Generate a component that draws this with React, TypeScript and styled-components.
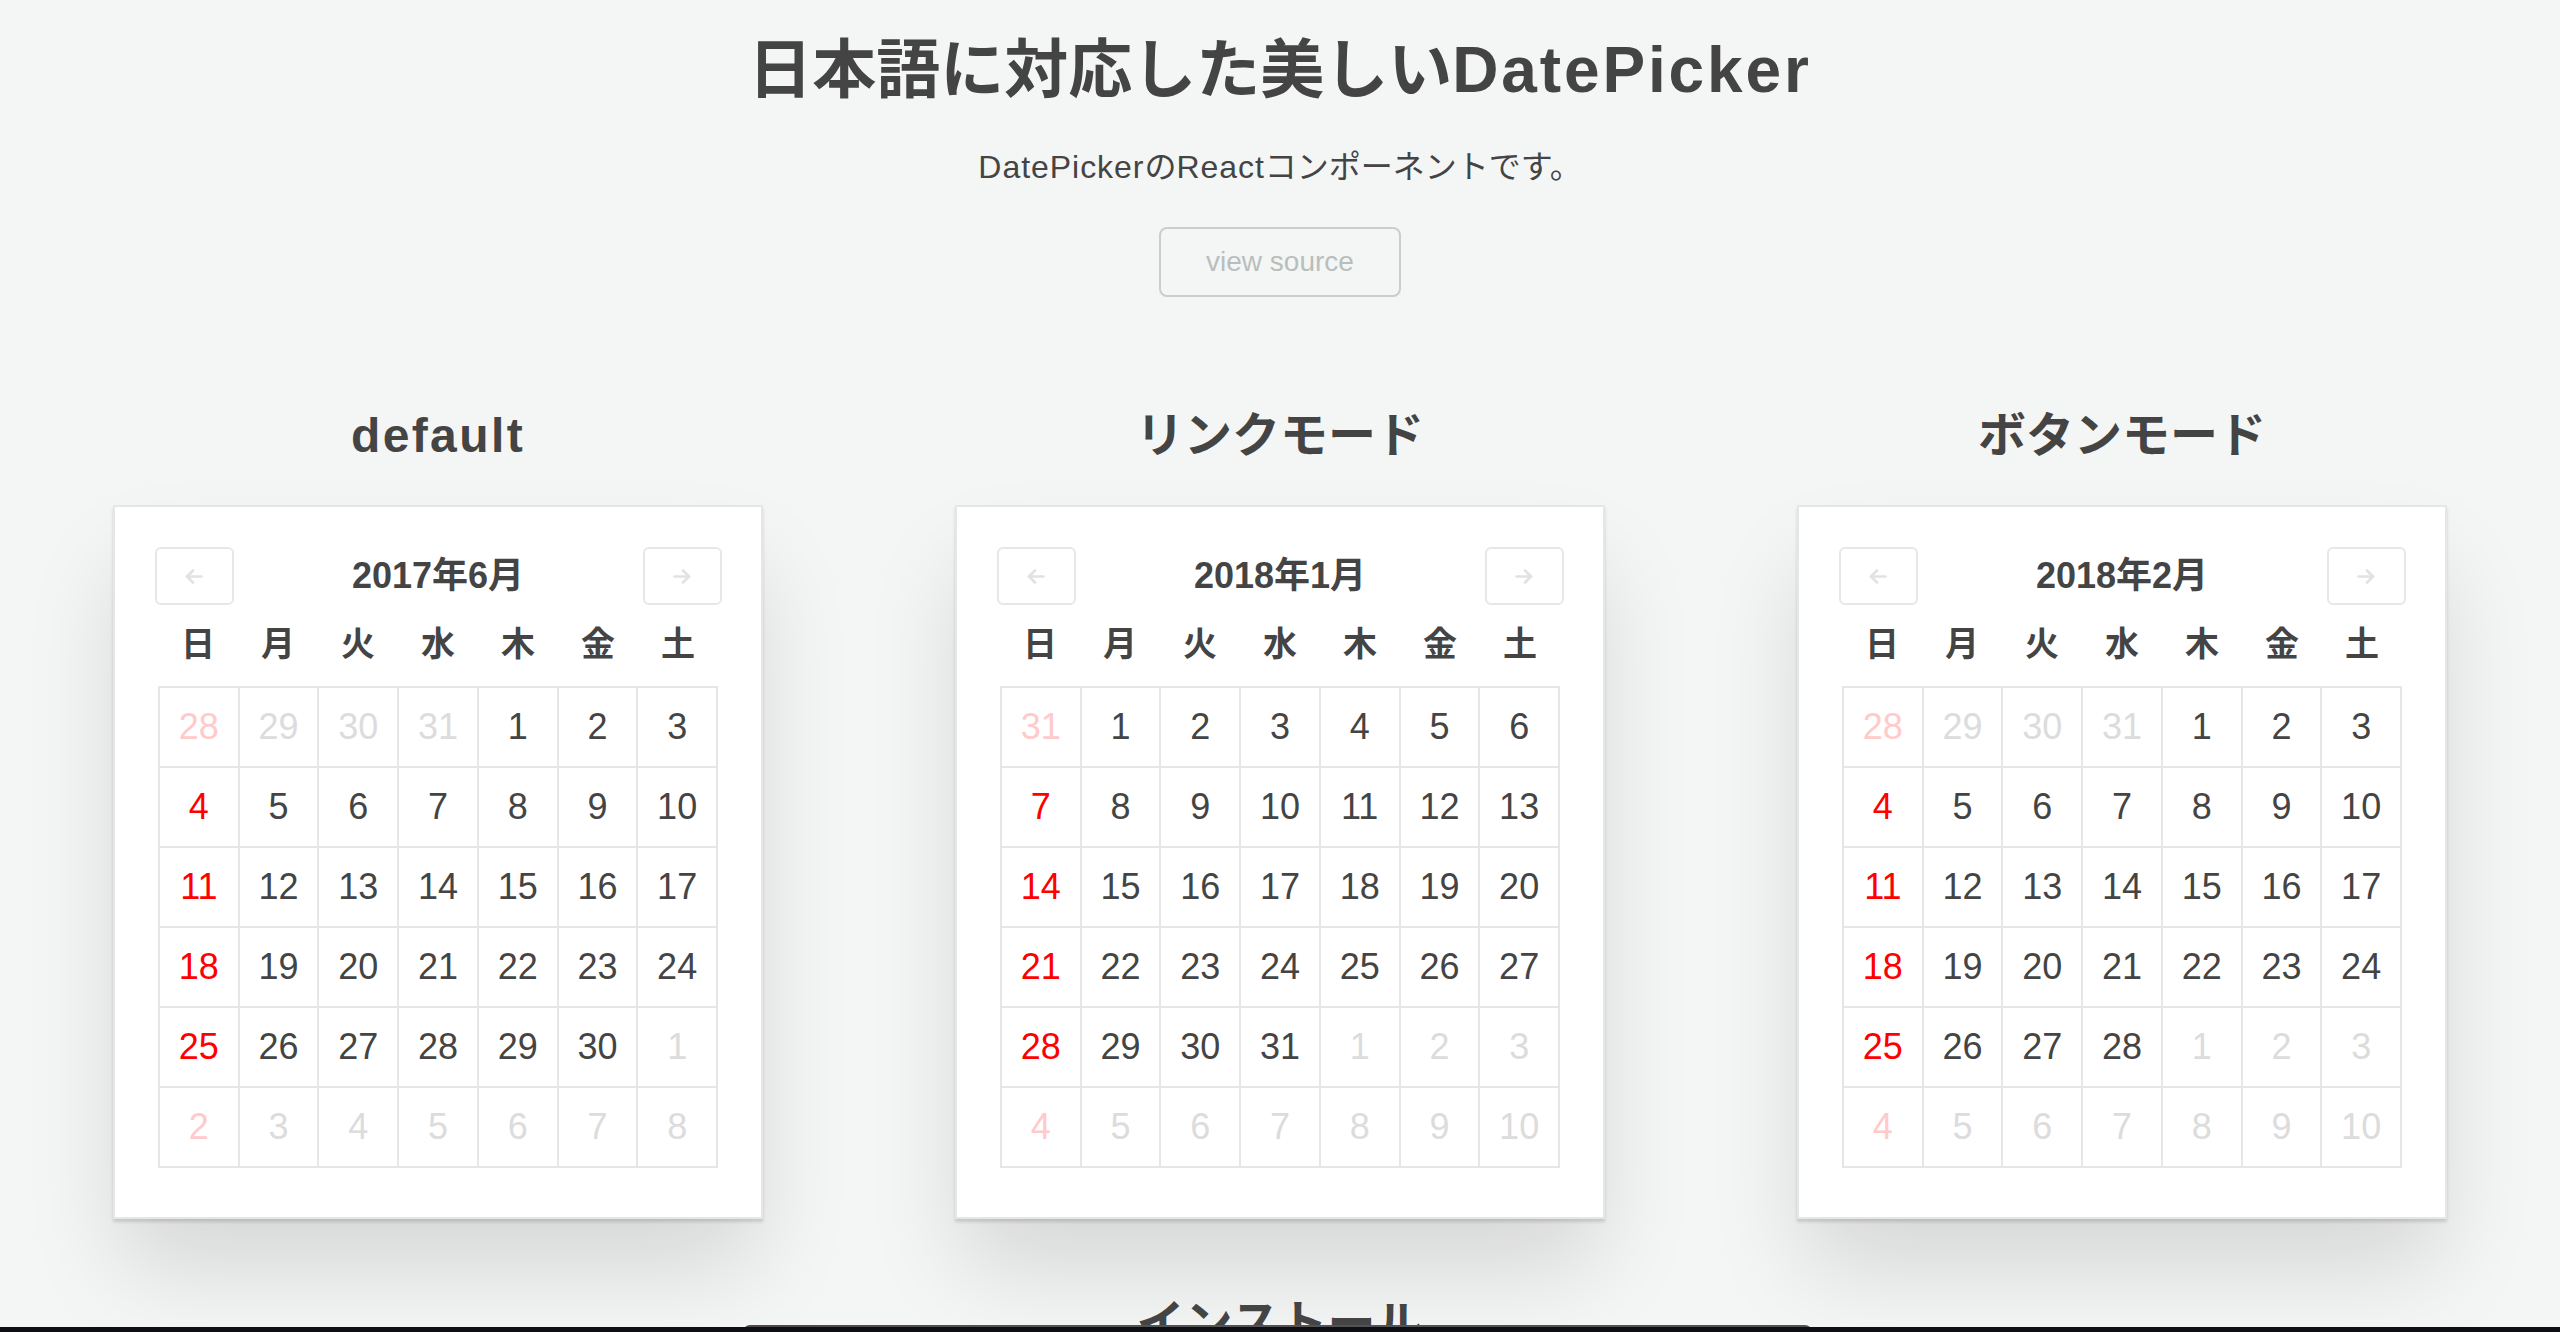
import React from "react";
import styled, {createGlobalStyle} from "styled-components";

const GlobalStyle = createGlobalStyle`
    html, body {
        margin: 0;
        padding: 0;
    }

    body {
        background: #f4f6f5;
        color: #444;
        font-family: "Liberation Sans", "Noto Sans CJK JP", sans-serif;
    }
`;

const Page = styled.div`
    display: flex;
    flex-direction: column;
    align-items: center;
    padding-top: 34px;
`;

const Title = styled.h1`
    margin: 0;
    font-size: 64px;
    line-height: 72px;
    font-weight: 700;
`;

// latin runs in the reference font are wider than Arial, so track them out a bit
const Latin = styled.span<{ $track: number }>`
    letter-spacing: ${(props) => props.$track}em;
`;

const Lead = styled.p`
    margin: 41px 0 0;
    font-size: 32px;
    line-height: 40px;
`;

const SourceLink = styled.a`
    margin-top: 40px;
    box-sizing: border-box;
    width: 242px;
    height: 70px;
    border: 2px solid #c9cdcc;
    border-radius: 8px;
    color: #b9bebd;
    font-size: 28px;
    line-height: 66px;
    text-align: center;
    text-decoration: none;
`;

const Sections = styled.div`
    box-sizing: border-box;
    width: 100%;
    margin-top: 111px;
    padding: 0 17px;
    display: grid;
    grid-template-columns: repeat(3, 1fr);
`;

const Column = styled.section`
    display: flex;
    flex-direction: column;
    align-items: center;
`;

const Heading = styled.h2`
    margin: 0;
    font-size: 48px;
    line-height: 56px;
    font-weight: 700;
`;

const Card = styled.div`
    box-sizing: border-box;
    width: 650px;
    margin-top: 41px;
    padding: 40px 0 49px;
    background: #fff;
    border: 2px solid #e4e7e6;
    box-shadow: 0 3px 3px rgba(0, 0, 0, 0.14), 0 55px 90px -8px rgba(0, 0, 0, 0.13);
`;

const CalHeader = styled.div`
    width: 567px;
    height: 58px;
    margin: 0 auto;
    display: flex;
    justify-content: space-between;
    align-items: center;
`;

const NavButton = styled.button`
    box-sizing: border-box;
    width: 79px;
    height: 58px;
    padding: 0;
    display: flex;
    align-items: center;
    justify-content: center;
    background: #fff;
    border: 2px solid #e6e8e8;
    border-radius: 6px;
    color: #e0e3e3;
    cursor: pointer;
`;

const MonthLabel = styled.div`
    font-size: 36px;
    line-height: 58px;
    font-weight: 700;
`;

const Weekdays = styled.div`
    width: 560px;
    margin: 18px auto 21px;
    display: grid;
    grid-template-columns: repeat(7, 1fr);
    font-size: 34px;
    line-height: 42px;
    font-weight: 700;
    text-align: center;
`;

const Days = styled.div`
    box-sizing: border-box;
    width: 560px;
    margin: 0 auto;
    display: grid;
    grid-template-columns: repeat(7, 1fr);
    border-top: 2px solid #e4e7e6;
    border-left: 2px solid #e4e7e6;
`;

type Tone = "normal" | "sunday" | "outside" | "outsideSunday";

const toneColor: Record<Tone, string> = {
    normal: "#444",
    sunday: "#ff0000",
    outside: "#dcdcdc",
    outsideSunday: "#ffcaca",
};

const Day = styled.div<{ $tone: Tone }>`
    box-sizing: border-box;
    height: 80px;
    display: flex;
    align-items: center;
    justify-content: center;
    border-right: 2px solid #e4e7e6;
    border-bottom: 2px solid #e4e7e6;
    font-size: 36px;
    color: ${(props) => toneColor[props.$tone]};
`;

const NextHeading = styled(Heading)`
    margin-top: 77px;
`;

const DesktopEdge = styled.div`
    position: fixed;
    left: 0;
    right: 0;
    bottom: 0;
    height: 5px;
    background: #0d0f14;
`;

const Dock = styled.div`
    position: fixed;
    left: 743px;
    width: 1069px;
    bottom: 0;
    height: 7px;
    border-radius: 8px 8px 0 0;
    background: linear-gradient(90deg, #4f4749, #535355 30%, #505153);
`;

const WEEKDAYS = ["日", "月", "火", "水", "木", "金", "土"];

interface DayCell {
    date: number;
    tone: Tone;
}

function buildDays(year: number, month: number): DayCell[] {
    const first = new Date(year, month - 1, 1);
    const start = 1 - first.getDay();
    return Array.from({length: 42}, (_, i) => {
        const d = new Date(year, month - 1, start + i);
        const inMonth = d.getMonth() === month - 1;
        const sunday = d.getDay() === 0;
        let tone: Tone = "normal";
        if (inMonth && sunday) tone = "sunday";
        if (!inMonth) tone = sunday ? "outsideSunday" : "outside";
        return {date: d.getDate(), tone};
    });
}

function Arrow({dir}: { dir: "left" | "right" }) {
    return (
        <svg width="18" height="15" viewBox="0 0 18 15" fill="none" stroke="currentColor"
             strokeWidth="2.6" strokeLinecap="round" strokeLinejoin="round"
             style={{transform: dir === "right" ? "scaleX(-1)" : undefined}}>
            <path d="M16.5 7.5H2"/>
            <path d="M8 1.5L2 7.5l6 6"/>
        </svg>
    );
}

function Calendar({year, month}: { year: number; month: number }) {
    const days = buildDays(year, month);
    return (
        <Card>
            <CalHeader>
                <NavButton aria-label="前の月"><Arrow dir="left"/></NavButton>
                <MonthLabel>{year}年{month}月</MonthLabel>
                <NavButton aria-label="次の月"><Arrow dir="right"/></NavButton>
            </CalHeader>
            <Weekdays>
                {WEEKDAYS.map((w) => (
                    <span key={w}>{w}</span>
                ))}
            </Weekdays>
            <Days>
                {days.map((d, i) => (
                    <Day key={i} $tone={d.tone}>{d.date}</Day>
                ))}
            </Days>
        </Card>
    );
}

const DEMOS = [
    {label: <Latin $track={0.05}>default</Latin>, year: 2017, month: 6},
    {label: "リンクモード", year: 2018, month: 1},
    {label: "ボタンモード", year: 2018, month: 2},
];

export default function App() {
    return (
        <>
            <GlobalStyle/>
            <Page>
                <Title>
                    日本語に対応した美しい<Latin $track={0.045}>DatePicker</Latin>
                </Title>
                <Lead>
                    <Latin $track={0.03}>DatePicker</Latin>の<Latin $track={0.03}>React</Latin>コンポーネントです。
                </Lead>
                <SourceLink href="#">view source</SourceLink>
                <Sections>
                    {DEMOS.map((demo, i) => (
                        <Column key={i}>
                            <Heading>{demo.label}</Heading>
                            <Calendar year={demo.year} month={demo.month}/>
                        </Column>
                    ))}
                </Sections>
                <NextHeading>インストール</NextHeading>
            </Page>
            <Dock/>
            <DesktopEdge/>
        </>
    );
}
